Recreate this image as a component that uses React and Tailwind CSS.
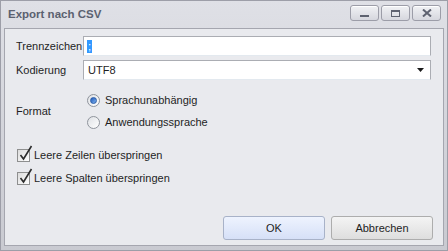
import React from "react";

function TitleBtn({ children }) {
  return (
    <div className="w-[29px] h-[16px] rounded-[3px] border border-[#9c9da8] bg-gradient-to-b from-[#f1f2f5] to-[#d6d7de] flex items-center justify-center shadow-[inset_0_1px_0_#ffffff]">
      {children}
    </div>
  );
}

function Radio({ checked }) {
  return (
    <div className="w-[13px] h-[13px] rounded-full border border-[#8f949c] bg-gradient-to-br from-[#dfe1e5] to-[#ffffff] flex items-center justify-center">
      {checked && (
        <div className="w-[7px] h-[7px] rounded-full bg-gradient-to-br from-[#1f57b8] to-[#7fb3ee] border border-[#2a5ca8]" />
      )}
    </div>
  );
}

function Check() {
  return (
    <div className="relative w-[13px] h-[13px] border border-[#8e8f8f] bg-gradient-to-br from-[#dcdcdc] to-[#ffffff]">
      <svg className="absolute left-[1px] top-[-5px]" width="14" height="16" viewBox="0 0 14 16">
        <path d="M1.5 10 L4.5 14 L12.5 1" fill="none" stroke="#2c2c2c" strokeWidth="1.6" strokeLinejoin="miter" />
      </svg>
    </div>
  );
}

export default function App() {
  return (
    <div
      className="w-[448px] h-[251px] border border-[#9d9ea8] bg-gradient-to-b from-[#dfe0e6] to-[#c9cad1] flex flex-col text-[11px] text-[#1e1e1e]"
      style={{ fontFamily: '"Liberation Sans", Arial, sans-serif' }}
    >
      <div className="h-[27px] flex items-start justify-between pl-[7px] pr-[6px]">
        <div className="mt-[6px] text-[11.5px] font-bold text-[#5b6170] leading-[14px]">Export nach CSV</div>
        <div className="flex gap-[2px] mt-[4px]">
          <TitleBtn>
            <div className="w-[9px] h-[2px] bg-[#5e6270] mt-[6px]" />
          </TitleBtn>
          <TitleBtn>
            <div className="w-[9px] h-[7px] border border-t-2 border-[#5e6270]" />
          </TitleBtn>
          <TitleBtn>
            <svg width="10" height="8" viewBox="0 0 10 8">
              <path d="M1 0.5 L9 7.5 M9 0.5 L1 7.5" stroke="#5e6270" strokeWidth="2" />
            </svg>
          </TitleBtn>
        </div>
      </div>
      <div className="mx-[3px] mb-[4px] flex-1 border border-[#a5a6af] bg-[#e9eaee] flex flex-col pl-[11px] pr-[12px] pt-[7px]">
        <div className="flex items-center h-[20px]">
          <div className="w-[67px]">Trennzeichen</div>
          <div className="flex-1 h-[20px] bg-white border border-[#abadb3] border-b-[#e3e9ef] flex items-center pl-[3px]">
            <span className="bg-[#3399ff] text-white px-[1px] leading-[13px]">;</span>
          </div>
        </div>
        <div className="flex items-center h-[20px] mt-[4px]">
          <div className="w-[67px]">Kodierung</div>
          <div className="flex-1 h-[20px] bg-white border border-[#abadb3] border-b-[#e3e9ef] flex items-center justify-between pl-[4px] pr-[6px]">
            <span>UTF8</span>
            <svg width="7" height="4" viewBox="0 0 7 4">
              <path d="M0 0 H7 L3.5 4 Z" fill="#1a1a1a" />
            </svg>
          </div>
        </div>
        <div className="flex items-center mt-[14px]">
          <div className="w-[71px]">Format</div>
          <div className="flex flex-col gap-[9px]">
            <div className="flex items-center gap-[5px] h-[13px]">
              <Radio checked />
              <span>Sprachunabhängig</span>
            </div>
            <div className="flex items-center gap-[5px] h-[13px]">
              <Radio />
              <span>Anwendungssprache</span>
            </div>
          </div>
        </div>
        <div className="flex flex-col gap-[10px] mt-[20px] pl-[1px]">
          <div className="flex items-center gap-[4px] h-[13px]">
            <Check />
            <span>Leere Zeilen überspringen</span>
          </div>
          <div className="flex items-center gap-[4px] h-[13px]">
            <Check />
            <span>Leere Spalten überspringen</span>
          </div>
        </div>
        <div className="flex-1" />
        <div className="flex justify-end gap-[6px] mb-[5px] mr-[-2px]">
          <div className="w-[102px] h-[24px] rounded-[3px] border border-[#a8b2c8] bg-gradient-to-b from-[#eef3fe] to-[#d6e0f7] flex items-center justify-center">OK</div>
          <div className="w-[102px] h-[24px] rounded-[3px] border border-[#adadad] bg-gradient-to-b from-[#f4f4f4] to-[#dedede] flex items-center justify-center">Abbrechen</div>
        </div>
      </div>
    </div>
  );
}
